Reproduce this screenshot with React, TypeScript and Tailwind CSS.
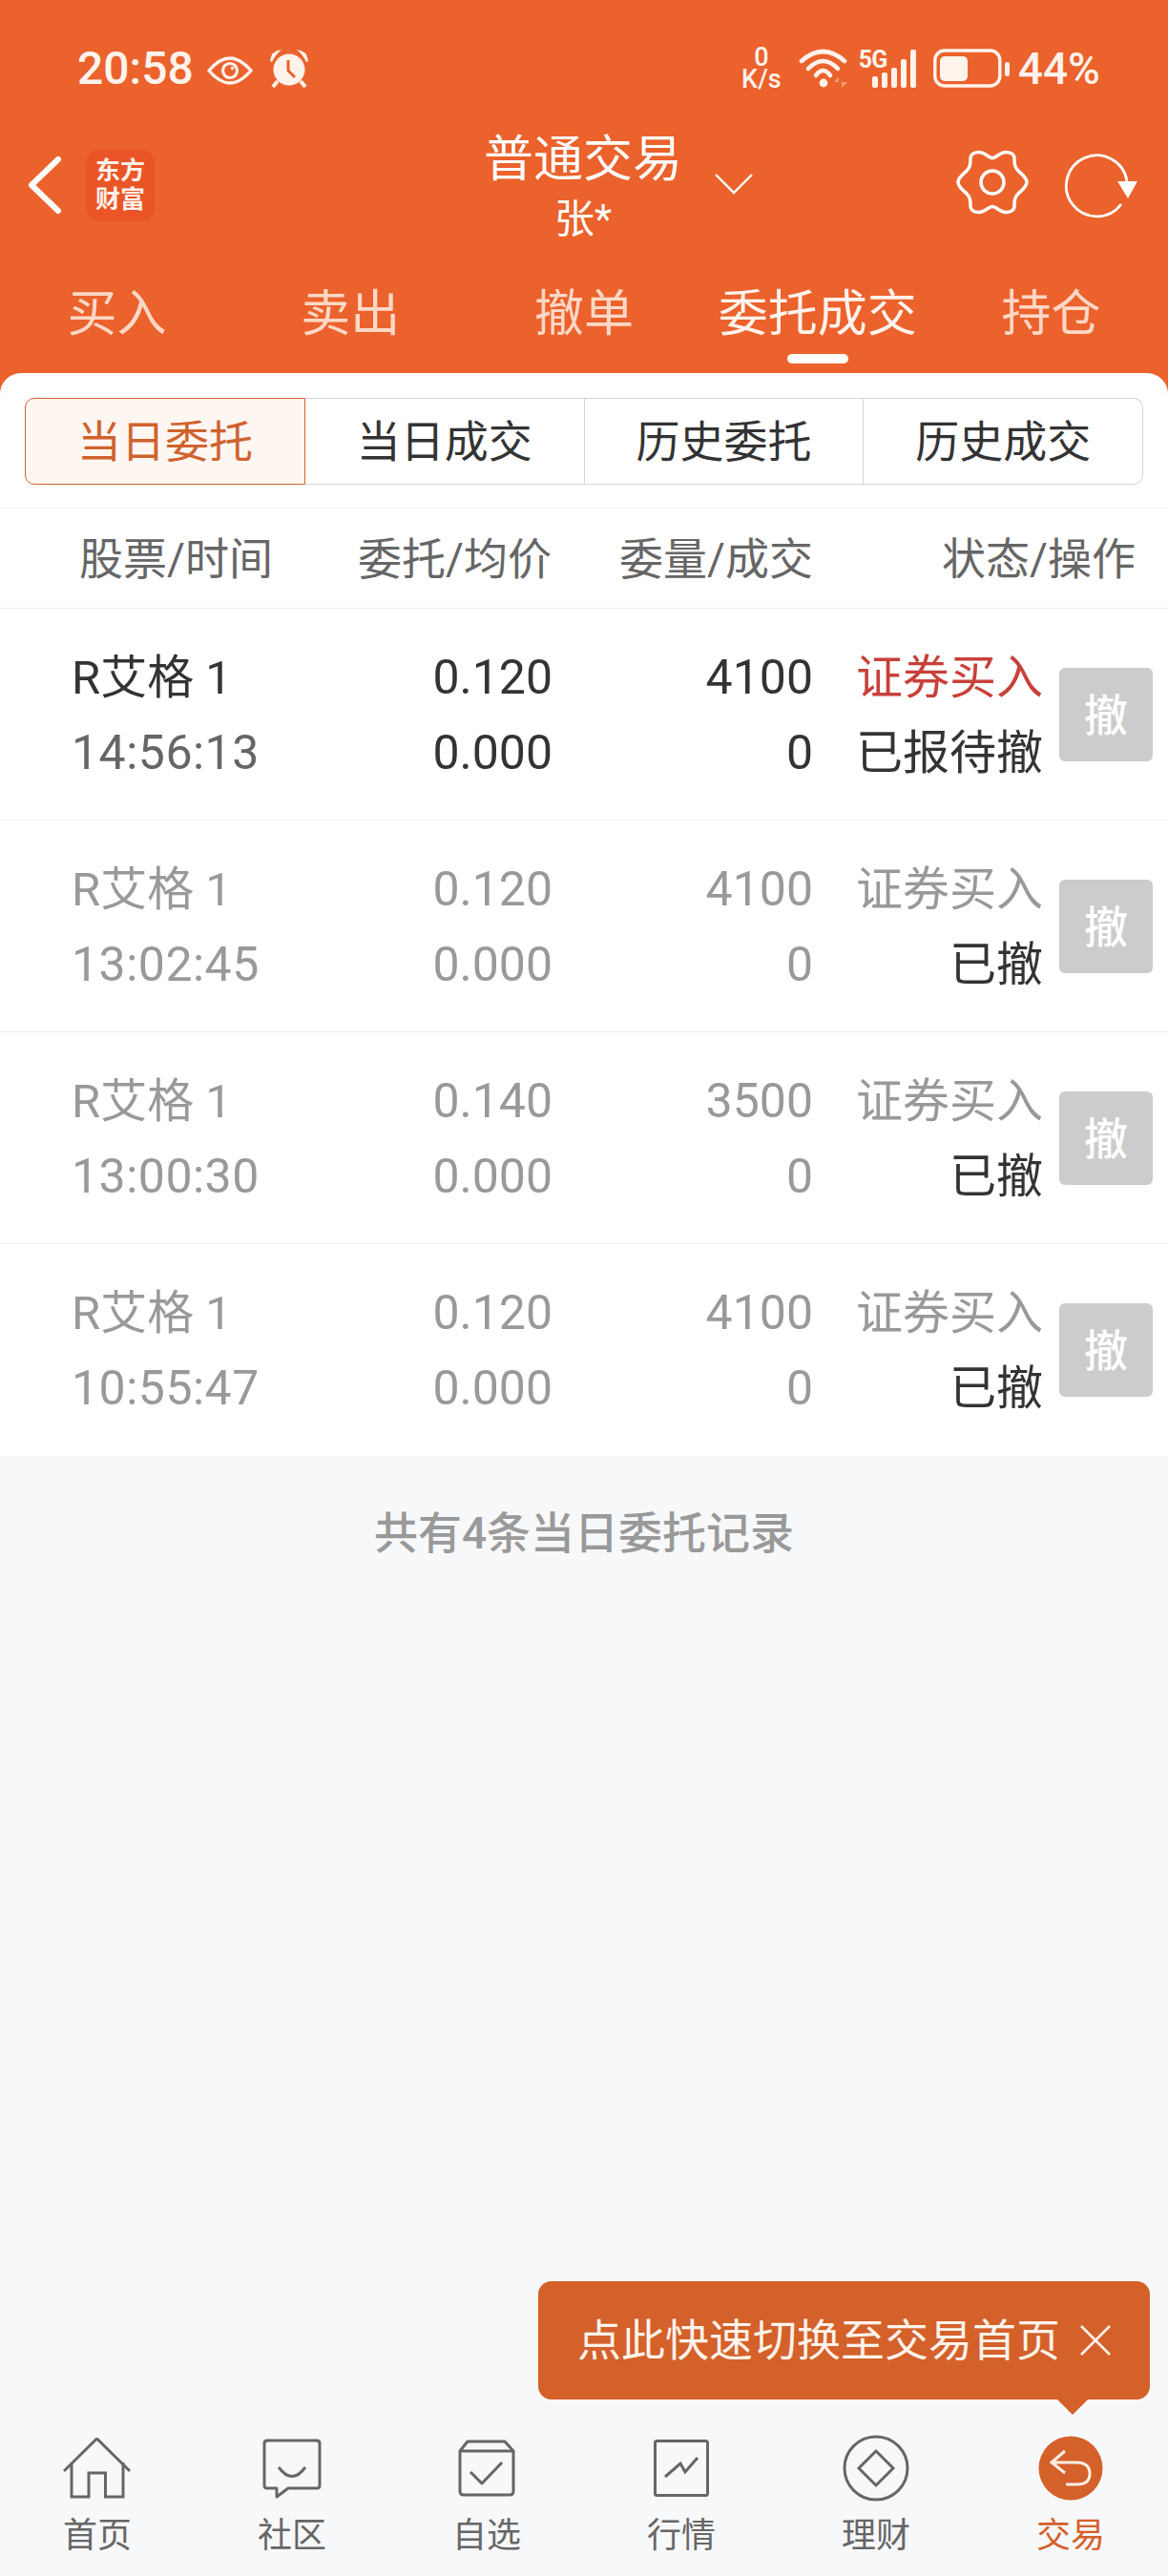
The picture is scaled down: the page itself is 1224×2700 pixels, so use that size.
const orange = "bg-[#eb622c]";

const tabs = ["买入", "卖出", "撤单", "委托成交", "持仓"];
const segments = ["当日委托", "当日成交", "历史委托", "历史成交"];
const columns = ["股票/时间", "委托/均价", "委量/成交", "状态/操作"];

type Order = {
  time: string;
  price: string;
  qty: string;
  status: string;
  live?: boolean;
};

const orders: Order[] = [
  { time: "14:56:13", price: "0.120", qty: "4100", status: "已报待撤", live: true },
  { time: "13:02:45", price: "0.120", qty: "4100", status: "已撤" },
  { time: "13:00:30", price: "0.140", qty: "3500", status: "已撤" },
  { time: "10:55:47", price: "0.120", qty: "4100", status: "已撤" },
];

function StatusBar() {
  return (
    <div className="flex h-[144px] items-center pl-[81px] pr-[71px] text-[#fff3ec]">
      <span className="text-[48px] font-medium leading-none">20:58</span>
      <svg width="48" height="30" viewBox="0 0 48 30" className="ml-[14px] mt-[4px]" fill="none" stroke="currentColor">
        <path d="M2 15Q24 -11 46 15Q24 41 2 15Z" strokeWidth="3.4" />
        <circle cx="24" cy="15" r="7.5" strokeWidth="3.2" />
        <circle cx="26.5" cy="12.5" r="1.8" fill="currentColor" stroke="none" />
      </svg>
      <svg width="42" height="40" viewBox="0 0 42 40" className="ml-[17px]" fill="currentColor">
        <circle cx="21" cy="21" r="16.5" />
        <path d="M1 12Q2 1 13 0Q7 5 3 13Z" />
        <path d="M41 12Q40 1 29 0Q35 5 39 13Z" />
        <path d="M9 33L4 39M33 33L38 39" stroke="currentColor" strokeWidth="4" />
        <path d="M20 11V22L27 29" stroke="#eb622c" strokeWidth="3" fill="none" />
      </svg>
      <div className="ml-auto flex w-[44px] flex-col items-center text-[27px] font-medium leading-[23px]">
        <span>0</span>
        <span>K/s</span>
      </div>
      <svg width="52" height="42" viewBox="0 0 52 42" className="ml-[17px]" fill="none" stroke="currentColor" strokeWidth="4.6" strokeLinecap="round">
        <path d="M3 13Q25.5 -7 48 13" />
        <path d="M10 21Q25.5 5 41 21" />
        <path d="M18 28Q25.5 18 33 28" />
        <circle cx="26" cy="36" r="4.4" fill="currentColor" stroke="none" />
        <path d="M42 41V29L37 35H42ZM45 29V41L51 35H45Z" fill="#f59b77" stroke="none" />
      </svg>
      <div className="relative ml-[11px] h-[42px] w-[64px]">
        <span className="absolute left-0 top-[-1px] text-[25px] font-bold leading-none tracking-[-1px]">5G</span>
        <svg width="48" height="40" viewBox="0 0 48 40" className="absolute left-[14px] top-[1px]" fill="currentColor">
          <rect x="0" y="28" width="6" height="12" rx="2" />
          <rect x="10" y="24" width="6" height="16" rx="2" />
          <rect x="20" y="19" width="6" height="21" rx="2" />
          <rect x="30" y="10" width="6" height="30" rx="2" />
          <rect x="40" y="0" width="6" height="40" rx="2" />
        </svg>
      </div>
      <svg width="82" height="42" viewBox="0 0 82 42" className="ml-[14px]" fill="none" stroke="currentColor">
        <rect x="1.8" y="2" width="68" height="37" rx="10" strokeWidth="3.4" />
        <rect x="7" y="8" width="29" height="26" rx="5" fill="currentColor" stroke="none" />
        <rect x="75" y="14" width="5" height="15" rx="2.5" fill="currentColor" stroke="none" />
      </svg>
      <span className="ml-[7px] text-[46px] font-medium leading-none">44%</span>
    </div>
  );
}

function NavBar() {
  return (
    <div className="flex h-[100px] items-center pl-[29px] text-white">
      <svg width="36" height="60" viewBox="0 0 36 60" fill="none" stroke="currentColor" strokeWidth="6" strokeLinecap="round" strokeLinejoin="round">
        <path d="M32 3L4 30L32 57" />
      </svg>
      <div className="ml-[25px] flex h-[75px] w-[72px] flex-col items-center justify-center rounded-[14px] bg-[#ea5527] text-[26px] font-bold leading-[30px] text-[#fff0e8]">
        <span>东方</span>
        <span>财富</span>
      </div>
      <div className="ml-[347px] flex w-[204px] flex-col items-center pt-[4px]">
        <span className="whitespace-nowrap text-[52px] leading-[54px]">普通交易</span>
        <span className="mt-[13px] text-[42px] leading-[44px]">张*</span>
      </div>
      <svg width="40" height="22" viewBox="0 0 40 22" className="ml-[36px] mt-[-2px]" fill="none" stroke="currentColor" strokeWidth="2.4">
        <path d="M1 1L20 20L39 1" />
      </svg>
      <svg width="80" height="72" viewBox="-40 -36 80 72" className="ml-[211px] mt-[-6px]" fill="none" stroke="currentColor" strokeWidth="3.5">
        <path d="M0 -25.5C4 -25.5 8 -31.5 14 -31.5C19 -31.5 23 -29 23 -25C23 -20 23 -16 27 -12C31 -8 36 -5 36 0C36 5 31 8 27 12C23 16 23 20 23 25C23 29 19 31.5 14 31.5C8 31.5 4 25.5 0 25.5C-4 25.5 -8 31.5 -14 31.5C-19 31.5 -23 29 -23 25C-23 20 -23 16 -27 12C-31 8 -36 5 -36 0C-36 -5 -31 -8 -27 -12C-23 -16 -23 -20 -23 -25C-23 -29 -19 -31.5 -14 -31.5C-8 -31.5 -4 -25.5 0 -25.5Z" />
        <circle cx="0" cy="0" r="12" />
      </svg>
      <svg width="78" height="70" viewBox="0 0 78 70" className="ml-[35px]" fill="none" stroke="currentColor" strokeWidth="2.8">
        <path d="M60 55A32 32 0 1 1 66 31" />
        <path d="M56 31H77L67 49Z" fill="currentColor" stroke="none" />
      </svg>
    </div>
  );
}

function Tabs() {
  return (
    <div className="grid grid-cols-5 pt-[61px]">
      {tabs.map((tab) => {
        const active = tab === "委托成交";
        return (
          <div key={tab} className="flex flex-col items-center">
            <span className={`text-[52px] leading-[50px] ${active ? "text-[#fff3ec]" : "text-[#fdd8c6]"}`}>{tab}</span>
            <span className={`mt-[16px] mb-[10px] h-[10px] w-[64px] rounded-full ${active ? "bg-white" : ""}`} />
          </div>
        );
      })}
    </div>
  );
}

function Segments() {
  return (
    <div className="h-[142px] rounded-t-[22px] border-b border-[#f3f3f3] bg-white px-[26px] pt-[26px]">
      <div className="flex h-[91px] w-[1172px]">
        {segments.map((seg, i) => {
          const active = i === 0;
          return (
            <div
              key={seg}
              className={`flex flex-1 items-center justify-center border pt-[2px] text-[46px] ${
                active
                  ? "rounded-l-[10px] border-[#d0622e] bg-[#fef6f1] text-[#d0622e]"
                  : "border-l-0 border-[#d4d4d4] text-[#333333]"
              } ${i === 3 ? "rounded-r-[10px]" : ""}`}
            >
              {seg}
            </div>
          );
        })}
      </div>
    </div>
  );
}

function ColumnHeader() {
  return (
    <div className="flex h-[105px] items-center border-b border-[#efefef] bg-white pt-[2px] text-[46px] text-[#666666]">
      <span className="w-[337px] pl-[83px]">{columns[0]}</span>
      <span className="w-[241px] text-right">{columns[1]}</span>
      <span className="w-[274px] text-right">{columns[2]}</span>
      <span className="w-[338px] text-right">{columns[3]}</span>
    </div>
  );
}

function OrderRow({ order, last }: { order: Order; last: boolean }) {
  const main = order.live ? "text-[#333333]" : "text-[#999999]";
  return (
    <div className={`flex h-[222px] items-center bg-white ${last ? "" : "border-b border-[#f0f0f0]"}`}>
      <div className="w-[337px] pl-[75px] pt-[2px] leading-[79px]">
        <div className={`text-[49px] ${main}`}>R艾格 1</div>
        <div className={`text-[50px] tracking-[0.5px] ${order.live ? "text-[#666666]" : "text-[#999999]"}`}>{order.time}</div>
      </div>
      <div className={`w-[242px] pt-[2px] text-right text-[50px] leading-[79px] ${main}`}>
        <div>{order.price}</div>
        <div>0.000</div>
      </div>
      <div className={`w-[273px] pt-[2px] text-right text-[50px] leading-[79px] ${main}`}>
        <div>{order.qty}</div>
        <div>0</div>
      </div>
      <div className="w-[241px] pt-[2px] text-right text-[49px] leading-[79px]">
        <div className={order.live ? "text-[#c9403a]" : "text-[#999999]"}>证券买入</div>
        <div className="text-[#333333]">{order.status}</div>
      </div>
      <div className="ml-[17px] flex h-[98px] w-[98px] items-center justify-center rounded-[6px] bg-[#cccccc] pt-[3px] text-[46px] font-medium text-white">
        撤
      </div>
    </div>
  );
}

function HomeIcon() {
  return (
    <svg width="72" height="64" viewBox="0 0 72 64" fill="none" stroke="#666666" strokeWidth="3">
      <path d="M1 35L35.5 1L70 35" />
      <path d="M9 26V62H27V37H44.5V62H63V26" />
    </svg>
  );
}

function ChatIcon() {
  return (
    <svg width="62" height="63" viewBox="0 0 62 63" fill="none" stroke="#666666" strokeWidth="3" strokeLinejoin="round">
      <path d="M5 2H57Q60 2 60 5V49Q60 52 57 52H27L15 61V52H5Q2 52 2 49V5Q2 2 5 2Z" />
      <path d="M17 30Q31 49 45 30" />
    </svg>
  );
}

function WatchIcon() {
  return (
    <svg width="60" height="60" viewBox="0 0 60 60" fill="none" stroke="#666666" strokeWidth="3" strokeLinejoin="round">
      <path d="M10 2H49L58 12V54Q58 58 54 58H6Q2 58 2 54V12Z" />
      <path d="M2 12H58" />
      <path d="M13 34L25 46L46 24" />
    </svg>
  );
}

function MarketIcon() {
  return (
    <svg width="58" height="60" viewBox="0 0 58 60" fill="none" stroke="#666666" strokeWidth="3">
      <rect x="1.5" y="1.5" width="55" height="57" rx="2" />
      <path d="M12 39L28 25L33 34L46 19" />
    </svg>
  );
}

function WealthIcon() {
  return (
    <svg width="70" height="70" viewBox="0 0 70 70" fill="none" stroke="#666666" strokeWidth="3">
      <circle cx="35" cy="35" r="33" />
      <path d="M35 17L53 35L35 53L17 35Z" />
    </svg>
  );
}

function TradeIcon() {
  return (
    <svg width="68" height="68" viewBox="0 0 68 68" fill="none">
      <circle cx="34" cy="34" r="33.5" fill="#d4602a" />
      <path d="M28 16L14 28L28 39M14 28H40Q54 28 54 40Q54 51 40 51H29" stroke="#ffeee4" strokeWidth="3" />
    </svg>
  );
}

const navItems = [
  { label: "首页", icon: <HomeIcon /> },
  { label: "社区", icon: <ChatIcon /> },
  { label: "自选", icon: <WatchIcon /> },
  { label: "行情", icon: <MarketIcon /> },
  { label: "理财", icon: <WealthIcon /> },
  { label: "交易", icon: <TradeIcon />, active: true },
];

function BottomNav() {
  return (
    <div className="grid grid-cols-6 pb-[22px]">
      {navItems.map((item) => (
        <div key={item.label} className="flex flex-col items-center">
          <div className="flex h-[70px] items-center justify-center">{item.icon}</div>
          <span className={`mt-[16px] text-[36px] leading-[40px] ${item.active ? "text-[#d4602a]" : "text-[#666666]"}`}>
            {item.label}
          </span>
        </div>
      ))}
    </div>
  );
}

export default function App() {
  return (
    <div className="relative flex h-[2700px] w-[1224px] flex-col overflow-hidden bg-[#f7f8fa] [font-family:Roboto,'Noto_Sans_CJK_SC',sans-serif]">
      <div className={orange}>
        <StatusBar />
        <NavBar />
        <Tabs />
        <Segments />
      </div>
      <ColumnHeader />
      {orders.map((order, i) => (
        <OrderRow key={order.time} order={order} last={i === orders.length - 1} />
      ))}
      <div className="flex-1 pt-[58px] text-center text-[46px] font-medium leading-[46px] text-[#999999]">
        共有4条当日委托记录
      </div>
      <BottomNav />

      <div className="absolute left-[564px] top-[2391px] flex h-[124px] w-[641px] items-center rounded-[14px] bg-[#d4602a] pl-[41px] text-[46px] text-[#fff3ea]">
        <span className="whitespace-nowrap">点此快速切换至交易首页</span>
        <svg width="34" height="34" viewBox="0 0 34 34" className="ml-[20px]" fill="none" stroke="currentColor" strokeWidth="2.6">
          <path d="M2 2L32 32M32 2L2 32" />
        </svg>
        <span className="absolute left-[544px] top-full h-0 w-0 border-x-[16px] border-t-[16px] border-x-transparent border-t-[#d4602a]" />
      </div>
    </div>
  );
}
